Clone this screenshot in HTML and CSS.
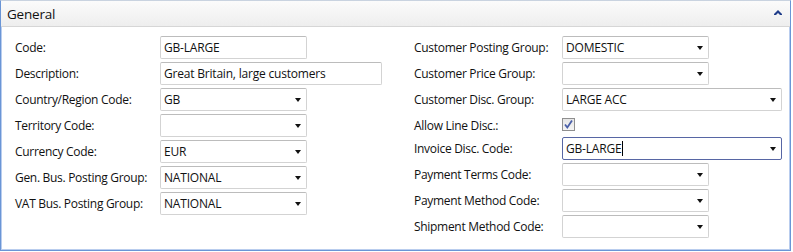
FILE: index.html
```html
<!DOCTYPE html>
<html lang="en">
<head>
  <meta charset="UTF-8" />
  <title>Customer Template - General</title>
  <link rel="stylesheet" href="styles.css">
</head>
<body>

  <div class="panel">
    <div class="panel-head">
      <span class="title">General</span>
      <svg class="collapse" width="8" height="5" viewBox="0 0 8 5"><path d="M0 4 L4 0 L8 4 L8 5 L6 5 L4 3 L2 5 L0 5 Z" fill="#1f3d8a"/></svg>
    </div>

    <div class="panel-body">
      <div class="col left">
        <div class="row"><label>Code:</label><div class="field">GB-LARGE</div></div>
        <div class="row"><label>Description:</label><div class="field wide">Great Britain, large customers</div></div>
        <div class="row"><label>Country/Region Code:</label><div class="field drop">GB</div></div>
        <div class="row"><label>Territory Code:</label><div class="field drop"></div></div>
        <div class="row"><label>Currency Code:</label><div class="field drop">EUR</div></div>
        <div class="row"><label>Gen. Bus. Posting Group:</label><div class="field drop">NATIONAL</div></div>
        <div class="row"><label>VAT Bus. Posting Group:</label><div class="field drop">NATIONAL</div></div>
      </div>

      <div class="col right">
        <div class="row"><label>Customer Posting Group:</label><div class="field drop">DOMESTIC</div></div>
        <div class="row"><label>Customer Price Group:</label><div class="field drop"></div></div>
        <div class="row"><label>Customer Disc. Group:</label><div class="field drop wide">LARGE ACC</div></div>
        <div class="row short"><label>Allow Line Disc.:</label>
          <span class="check"><svg width="11" height="11" viewBox="0 0 11 11"><path d="M2 5.5 L4.3 8.5 L9 1.5" fill="none" stroke="#4a5fa8" stroke-width="1.8"/></svg></span>
        </div>
        <div class="row"><label>Invoice Disc. Code:</label><div class="field drop wide focus">GB-LARGE<span class="caret"></span></div></div>
        <div class="row"><label>Payment Terms Code:</label><div class="field drop"></div></div>
        <div class="row"><label>Payment Method Code:</label><div class="field drop"></div></div>
        <div class="row"><label>Shipment Method Code:</label><div class="field drop"></div></div>
      </div>
    </div>
  </div>

</body>
</html>
```

FILE: styles.css
```css
*{box-sizing:border-box;margin:0;padding:0}
body{
  background:#fff;
  font-family:"Open Sans",Arial,sans-serif;
  font-size:12px;
  color:#111;
}
.panel{
  width:791px;
  height:251px;
  border:1px solid #6a95d6;
  border-top-color:#c9d3e0;
  box-shadow:inset 1px 0 0 #b9cdee,inset -1px 0 0 #b9cdee,inset 0 -1px 0 #b9cdee;
}
.panel-head{
  height:26px;
  display:flex;
  align-items:center;
  justify-content:space-between;
  padding:0 8px 0 6px;
  background:linear-gradient(#fbfbfb,#eeeeee);
  border-bottom:1px solid #d6d6d6;
}
.title{font-size:13.5px;color:#111;letter-spacing:-.2px}
.collapse{margin-top:-3px}
.panel-body{
  display:flex;
  padding-top:9px;
}
.col{display:flex;flex-direction:column}
.left{width:413px;padding-left:14px}
.right{padding-left:0}
.row{
  height:26px;
  display:flex;
  align-items:flex-start;
}
.row.short{height:23px}
label{
  display:block;
  height:23px;
  line-height:23px;
  letter-spacing:-.3px;
}
.left label{width:145px}
.right label{width:148px}
.field{
  position:relative;
  width:147px;
  height:23px;
  line-height:21px;
  padding-left:3px;
  border:1px solid #d3d3d3;
  border-top-color:#bcbcbc;
  border-radius:2px;
  background:#fff;
  letter-spacing:-.2px;
}
.left .field.wide{width:222px}
.right .field.wide{width:220px}
.field.drop::after{
  content:"";
  position:absolute;
  right:5px;
  top:9px;
  border-left:3.5px solid transparent;
  border-right:3.5px solid transparent;
  border-top:4px solid #111;
}
.field.focus{border-color:#5766a4}
.caret{
  display:inline-block;
  width:1px;
  height:15px;
  background:#000;
  vertical-align:middle;
  margin-left:1px;
  margin-top:-2px;
}
.check{
  width:13px;
  height:13px;
  margin-top:4px;
  border:1px solid #8f8f8f;
  background:linear-gradient(#e6e6e6,#f4f4f4);
  display:flex;
  align-items:center;
  justify-content:center;
}
```
